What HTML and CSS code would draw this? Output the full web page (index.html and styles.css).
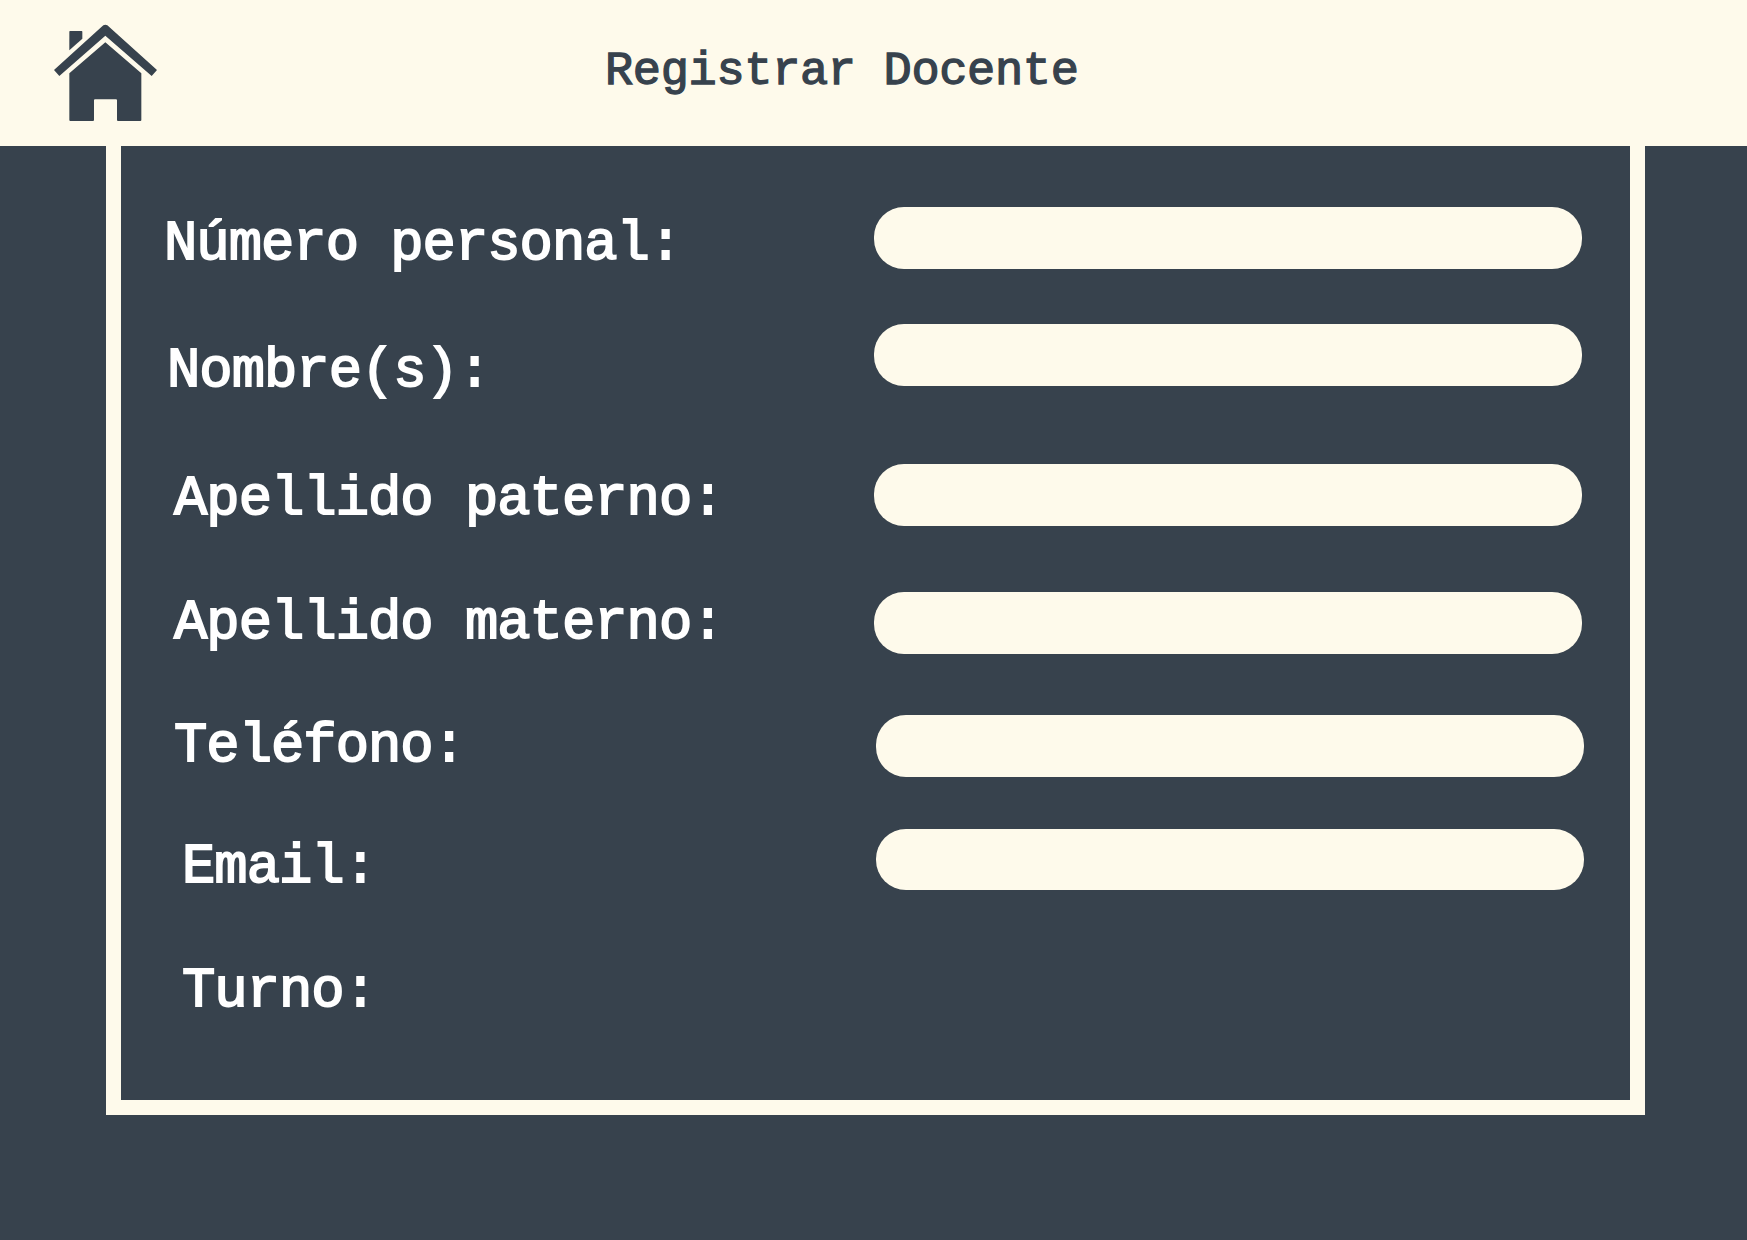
FILE: index.html
```html
<!DOCTYPE html>
<html lang="es">
<head>
<meta charset="utf-8">
<title>Registrar Docente</title>
<link rel="stylesheet" href="styles.css">
</head>
<body>
<header class="header">
  <a class="home" href="#" aria-label="Inicio">
    <svg class="home-icon" viewBox="42 42 312 294">
      <path d="M90 63H125Q127 63 127 65V86L88 121V65Q88 63 90 63Z"/>
      <path d="M42 180L190 46Q196 42 202 46L351 180L335 198L196 77L58 198Z"/>
      <path d="M88 190L196 97L304 190V330Q304 333 301 333H234Q231 333 231 330V271Q231 268 228 268H165Q162 268 162 271V330Q162 333 159 333H91Q88 333 88 330Z"/>
    </svg>
  </a>
  <h1 class="title">Registrar Docente</h1>
</header>
<main class="panel">
  <div class="labels">
    <label class="label numero" for="numero">Número personal:</label>
    <label class="label nombre" for="nombre">Nombre(s):</label>
    <label class="label paterno" for="paterno">Apellido paterno:</label>
    <label class="label materno" for="materno">Apellido materno:</label>
    <label class="label telefono" for="telefono">Teléfono:</label>
    <label class="label email" for="email">Email:</label>
    <span class="label turno">Turno:</span>
  </div>
  <div class="fields">
    <input class="field" id="numero">
    <input class="field field-nombre" id="nombre">
    <input class="field field-paterno" id="paterno">
    <input class="field field-materno" id="materno">
    <input class="field field-telefono" id="telefono">
    <input class="field field-email" id="email">
  </div>
</main>
</body>
</html>
```
FILE: styles.css
```css
* { box-sizing: border-box; }

body {
  margin: 0;
  height: 1240px;
  overflow: hidden;
  background: #37424d;
  font-family: "Liberation Mono", monospace;
}

.header {
  display: flex;
  align-items: flex-start;
  height: 146px;
  padding: 24px 0 0 54px;
  background: #fefaeb;
}

.home { display: block; width: 104px; height: 98px; }
.home-icon { display: block; width: 104px; height: 98px; fill: #37424d; }

.title {
  margin: 18px 0 0 447px;
  font-size: 47px;
  line-height: 60px;
  font-weight: 400;
  letter-spacing: -0.35px;
  white-space: pre;
  color: #37424d;
  -webkit-text-stroke: 1.3px #37424d;
}

.panel {
  display: flex;
  width: 1539px;
  height: 969px;
  margin-left: 106px;
  border: 15px solid #fefaeb;
  border-top: 0;
}

.labels {
  display: flex;
  flex-direction: column;
  width: 753px;
  padding: 69px 0 0 43px;
}

.label {
  height: 60px;
  font-size: 55.5px;
  line-height: 60px;
  letter-spacing: -0.98px;
  white-space: pre;
  color: #fff;
  -webkit-text-stroke: 1.8px #fff;
}

.nombre { margin: 67px 0 0 3px; }
.paterno { margin: 68px 0 0 10px; }
.materno { margin: 64px 0 0 10px; }
.telefono { margin: 63px 0 0 10px; }
.email { margin: 61px 0 0 18px; }
.turno { margin: 64px 0 0 18px; }

.fields {
  display: flex;
  flex-direction: column;
  padding-top: 61px;
}

.field {
  width: 708px;
  height: 61.5px;
  padding: 0 30px;
  border: 0;
  border-radius: 30px;
  background: #fefaeb;
  font: inherit;
  font-size: 36px;
  color: #37424d;
}

.field-nombre { margin-top: 55.5px; }
.field-paterno { margin-top: 78.5px; }
.field-materno { margin-top: 66.5px; }
.field-telefono { margin: 61.5px 0 0 1.5px; }
.field-email { margin: 52px 0 0 1.5px; }
```
